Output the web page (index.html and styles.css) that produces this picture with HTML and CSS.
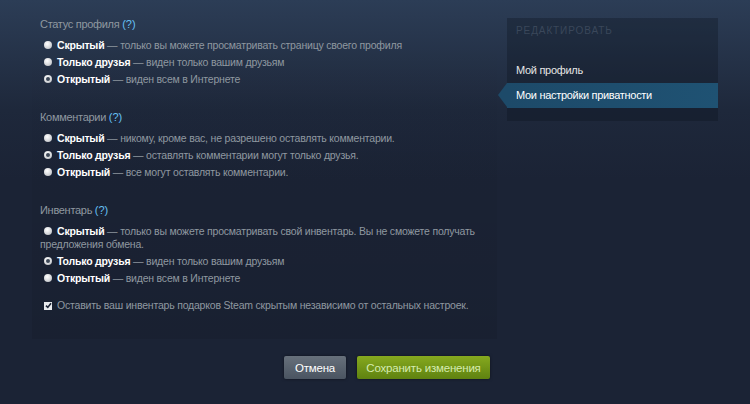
FILE: index.html
```html
<!DOCTYPE html>
<html lang="ru">
<head>
    <meta charset="UTF-8">
    <title>Настройки приватности</title>
    <link rel="stylesheet" href="styles.css">
</head>
<body>
    <div class="pagina">
        <div class="principal">
            <div class="panel">
                <div class="seccion">
                    <div class="titulo">Статус профиля <span class="ayuda">(?)</span></div>
                    <div class="fila"><span class="radio"></span><b>Скрытый</b> — только вы можете просматривать страницу своего профиля</div>
                    <div class="fila"><span class="radio"></span><b>Только друзья</b> — виден только вашим друзьям</div>
                    <div class="fila"><span class="radio sel"></span><b>Открытый</b> — виден всем в Интернете</div>
                </div>
                <div class="seccion">
                    <div class="titulo">Комментарии <span class="ayuda">(?)</span></div>
                    <div class="fila"><span class="radio"></span><b>Скрытый</b> — никому, кроме вас, не разрешено оставлять комментарии.</div>
                    <div class="fila"><span class="radio sel"></span><b>Только друзья</b> — оставлять комментарии могут только друзья.</div>
                    <div class="fila"><span class="radio"></span><b>Открытый</b> — все могут оставлять комментарии.</div>
                </div>
                <div class="seccion ultima">
                    <div class="titulo">Инвентарь <span class="ayuda">(?)</span></div>
                    <div class="fila"><span class="radio"></span><b>Скрытый</b> — только вы можете просматривать свой инвентарь. Вы не сможете получать предложения обмена.</div>
                    <div class="fila"><span class="radio sel"></span><b>Только друзья</b> — виден только вашим друзьям</div>
                    <div class="fila"><span class="radio"></span><b>Открытый</b> — виден всем в Интернете</div>
                    <div class="fila check"><span class="casilla">
                        <svg width="7" height="7" viewBox="0 0 7 7"><path d="M1 3.6 L2.8 5.4 L6 1.2" stroke="#1b2335" stroke-width="1.6" fill="none"/></svg>
                    </span>Оставить ваш инвентарь подарков Steam скрытым независимо от остальных настроек.</div>
                </div>
            </div>
            <div class="botones">
                <button class="btn cancelar">Отмена</button>
                <button class="btn guardar">Сохранить изменения</button>
            </div>
        </div>
        <div class="lateral">
            <div class="cabecera">Редактировать</div>
            <div class="item">Мой профиль</div>
            <div class="item activo">Мои настройки приватности</div>
        </div>
    </div>
</body>
</html>
```

FILE: styles.css
```css
body {
    margin: 0;
    height: 404px;
    overflow: hidden;
    font-family: "Liberation Sans", Arial, sans-serif;
    background: linear-gradient(to bottom, #2c3d56 0, #1e283b 110px, #1b2335 180px, #1b2335 100%);
    color: #8f98a0;
}
.pagina {
    display: flex;
    padding: 18px 0 0 32px;
}
.principal {
    width: 465px;
}
.panel {
    padding: 0 8px 27px 8px;
    background: linear-gradient(to bottom, rgba(0, 0, 0, 0) 0, rgba(0, 0, 0, 0.04) 60%, rgba(0, 0, 0, 0.08) 100%);
}
.seccion {
    margin-bottom: 25px;
}
.seccion.ultima {
    margin-bottom: 0;
}
.titulo {
    font-size: 11px;
    letter-spacing: -0.3px;
    line-height: 13px;
    margin-bottom: 8px;
    color: #8f98a0;
}
.ayuda {
    color: #66c0f4;
    letter-spacing: 0;
}
.fila {
    font-size: 10.5px;
    letter-spacing: -0.2px;
    line-height: 13px;
    margin-bottom: 4px;
    color: #8f98a0;
}
.fila b {
    color: #ffffff;
}
.radio {
    display: inline-block;
    width: 8px;
    height: 8px;
    border-radius: 50%;
    margin: 0 5px 0 4px;
    background: radial-gradient(circle at 40% 35%, #ffffff 0, #d6d8db 55%, #a9adb3 100%);
    position: relative;
}
.radio.sel::after {
    content: "";
    position: absolute;
    left: 2px;
    top: 2px;
    width: 4px;
    height: 4px;
    border-radius: 50%;
    background: #3b4656;
}
.check {
    margin-top: 14px;
    margin-bottom: 0;
}
.casilla {
    display: inline-flex;
    align-items: center;
    justify-content: center;
    width: 8px;
    height: 8px;
    margin: 0 5px 0 4px;
    background: #e8eaed;
}
.botones {
    display: flex;
    justify-content: flex-end;
    gap: 11px;
    padding: 17px 7px 0 0;
}
.btn {
    height: 23px;
    border: none;
    border-radius: 2px;
    font-family: "Liberation Sans", Arial, sans-serif;
    font-size: 11.5px;
    letter-spacing: -0.2px;
    padding: 0;
    white-space: nowrap;
}
.cancelar {
    width: 62px;
    color: #ffffff;
    background: linear-gradient(to bottom, #67707b 0, #4a5461 100%);
    box-shadow: 0 0 3px rgba(0, 0, 0, 0.5);
}
.guardar {
    width: 133px;
    color: #d6ecb0;
    background: linear-gradient(to bottom, #86a91f 0, #5f8210 100%);
    box-shadow: 0 0 3px rgba(0, 0, 0, 0.5);
}
.lateral {
    width: 211px;
    margin-left: 10px;
    padding: 8px 0 13px 0;
    background: rgba(10, 16, 26, 0.3);
    align-self: flex-start;
}
.cabecera {
    font-size: 10px;
    letter-spacing: 0.9px;
    line-height: 10px;
    text-transform: uppercase;
    color: #3a475a;
    padding-left: 9px;
    margin-bottom: 22px;
}
.item {
    height: 25px;
    line-height: 25px;
    font-size: 11px;
    letter-spacing: -0.3px;
    color: #e6e6e6;
    padding-left: 9px;
    position: relative;
}
.item.activo {
    color: #ffffff;
    background: linear-gradient(to right, #1d4a69 0, #1f5273 100%);
}
.item.activo::before {
    content: "";
    position: absolute;
    left: -9px;
    top: 0;
    border-top: 12.5px solid transparent;
    border-bottom: 12.5px solid transparent;
    border-right: 9px solid #1d4a69;
}
```
